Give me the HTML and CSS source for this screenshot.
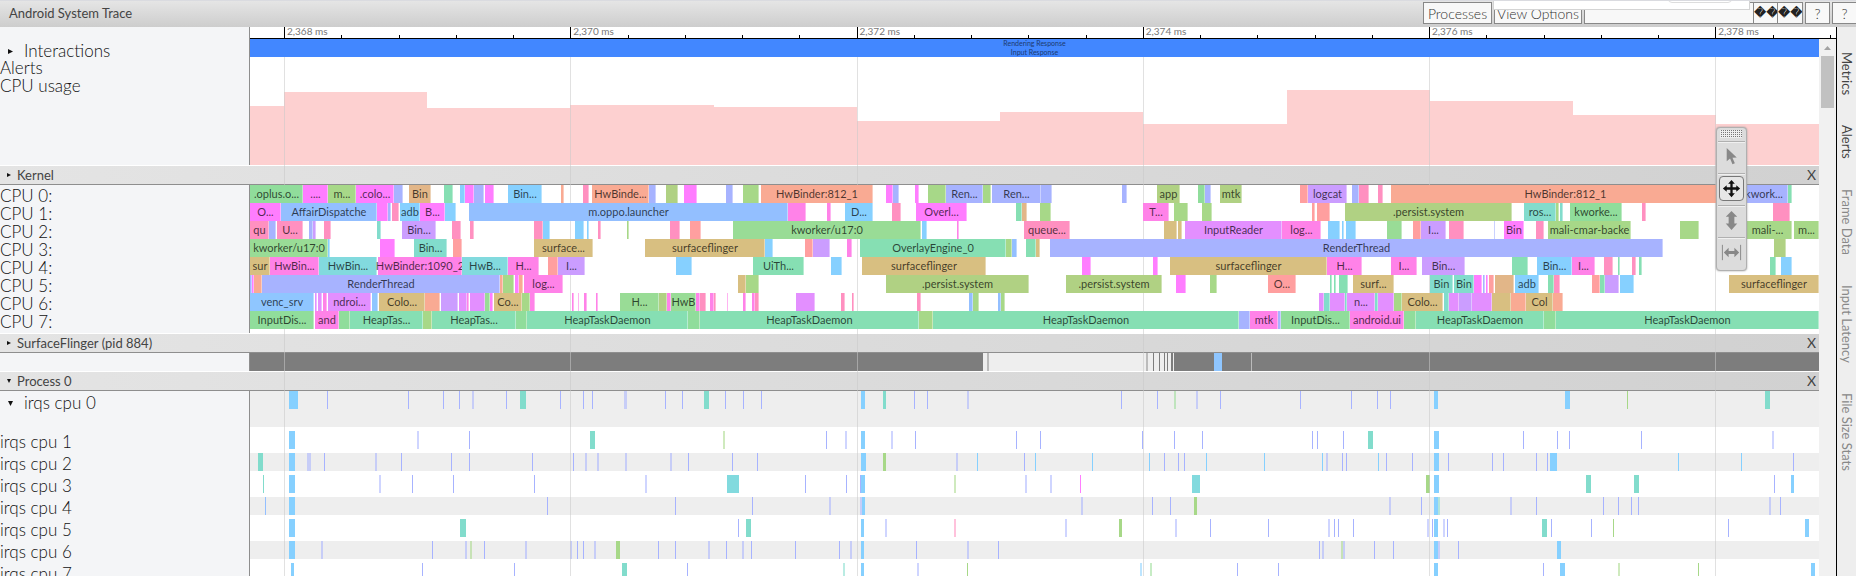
FILE: index.html
```html
<!DOCTYPE html>
<html lang="en">
<head>
<meta charset="utf-8">
<title>Android System Trace</title>
<link rel="stylesheet" href="styles.css">
</head>
<body>
<header class="topbar">
  <h1 class="title">Android System Trace</h1>
  <div class="controls">
    <button class="btn processes" type="button">Processes</button>
    <button class="btn options" type="button">View Options</button>
    <div class="find">
      <input class="find-input" type="text" aria-label="Find">
      <button class="btn sq glyph" type="button" aria-label="Previous">&#xFFFD;&#xFFFD;</button>
      <button class="btn sq glyph" type="button" aria-label="Next">&#xFFFD;&#xFFFD;</button>
    </div>
    <button class="btn sq" type="button">?</button>
    <button class="btn sq" type="button">?</button>
  </div>
  <div class="popup"><span class="popup-chip"></span></div>
</header>
<div class="main">
  <div class="viewer">
    <div class="ruler-row">
      <div class="side"></div>
      <div class="ruler"><div class="scale" id="scale"></div></div>
    </div>
    <div class="scroller">
      <main class="tracks">
        <div class="block">
          <div class="side">
            <div class="label nested"><span class="tri"></span>Interactions</div>
            <div class="label">Alerts</div>
            <div class="label">CPU usage</div>
          </div>
          <div class="lane">
            <div class="response"><span>Rendering Response</span><span>Input Response</span></div>
            <svg class="usage" viewBox="0 0 1569 73" preserveAspectRatio="none" aria-hidden="true">
              <path d="M0 73V14H34V0H177V16H320V13H464V15H607V29H750V20H893V32H1037V-2H1180V9H1323V23H1466V32H1569V73Z"/>
            </svg>
          </div>
        </div>
        <div class="group"><span class="tri"></span><span>Kernel</span><button class="close" type="button">X</button></div>
        <div class="block">
          <div class="side" id="cpu-labels"></div>
          <div class="lane cpus" id="cpus"></div>
        </div>
        <div class="group"><span class="tri"></span><span>SurfaceFlinger (pid 884)</span><button class="close" type="button">X</button></div>
        <div class="block">
          <div class="side"></div>
          <div class="lane"><div class="row quiet" id="flinger"></div></div>
        </div>
        <div class="group"><span class="tri down"></span><span>Process 0</span><button class="close" type="button">X</button></div>
        <div class="block last">
          <div class="side irq-labels" id="irq-labels"></div>
          <div class="lane irqs" id="irqs"></div>
        </div>
        <div class="gridlines" id="gridlines"></div>
        <div class="toolbox">
          <div class="grip"></div>
          <button class="tool" type="button" aria-label="Selection"><svg viewBox="0 0 24 24"><path d="M7 3V17L10.500 14L13 20L15.500 19L13 13.300L17.500 13Z" fill="#888"/></svg></button>
          <button class="tool on" type="button" aria-label="Pan"><svg viewBox="0 0 24 24"><path d="M12 3L15.500 7H13.200V10.800H17V8.500L21 12L17 15.500V13.200H13.200V17H15.500L12 21L8.500 17H10.800V13.200H7V15.500L3 12L7 8.500V10.800H10.800V7H8.500Z" fill="#111"/></svg></button>
          <button class="tool" type="button" aria-label="Zoom"><svg viewBox="0 0 24 24"><path d="M12 2L18 8H15V15H18L12 22L6 15H9V8H6Z" fill="#888"/></svg></button>
          <button class="tool" type="button" aria-label="Timing"><svg viewBox="0 0 24 24"><path d="M2.500 4V20M21.500 4V20" stroke="#888" fill="none"/><path d="M4 12L9 7V10.500H15V7L20 12L15 17V13.500H9V17Z" fill="#888"/></svg></button>
        </div>
      </main>
      <div class="scrollbar"><span class="arrow"></span><span class="thumb"></span></div>
    </div>
  </div>
  <nav class="tabs">
    <button class="tab" type="button">Metrics</button>
    <button class="tab" type="button">Alerts</button>
    <button class="tab off" type="button">Frame Data</button>
    <button class="tab off" type="button">Input Latency</button>
    <button class="tab off" type="button">File Size Stats</button>
  </nav>
</div>
<script src="trace.js"></script>
</body>
</html>
```

FILE: styles.css
```css
* { box-sizing: border-box; }
body {
  margin: 0;
  height: 100vh;
  display: flex;
  flex-direction: column;
  overflow: hidden;
  background: #fff;
  color: #222;
  font-family: Lato, "Open Sans", sans-serif;
  font-size: 13px;
}
button, input { font: inherit; color: inherit; margin: 0; padding: 0; }

/* Top bar */
.topbar {
  position: relative;
  flex: none;
  display: flex;
  align-items: center;
  height: 27px;
  padding-left: 9px;
  overflow: hidden;
  border-top: 1px solid #dadbe0;
  background: linear-gradient(#e5e5e5, #cdcdcd);
}
.title { margin: 0; flex: 1; padding-bottom: 2px; font-size: 13px; font-weight: 400; color: #444; }
.controls { display: flex; gap: 2px; margin-right: -1px; padding-bottom: 2px; font-size: 14px; font-weight: 300; color: #333; }
.btn { height: 22px; padding: 0; border: 1px solid #888; border-radius: 0; background: #f8f8f8; white-space: nowrap; }
.processes { width: 69px; }
.options { width: 88px; }
.sq { width: 25px; overflow: hidden; }
.glyph { font-size: 12px; color: #222; font-family: "DejaVu Sans", sans-serif; }
.find { display: flex; }
.find-input { width: 169px; height: 22px; border: 1px solid #888; border-right: 0; background: #f8f8f8; }
.find .glyph + .glyph { border-left: 0; }
.popup {
  position: absolute;
  top: 0;
  right: 106px;
  width: 257px;
  height: 9px;
  border: 1px solid #d4d4d4;
  border-top: 0;
  background: #fff;
}
.popup-chip {
  position: absolute;
  top: -8px;
  right: 17px;
  width: 64px;
  height: 10px;
  border: 1px solid #ddd;
  border-radius: 4px;
}

/* Frame */
.main { flex: 1; min-height: 0; display: flex; }
.viewer { flex: 1; min-width: 0; display: flex; flex-direction: column; }
.ruler-row { flex: none; display: flex; height: 12px; }
.side { flex: none; width: 250px; padding-right: 1px; border-right: 1px solid #8e8e8e; background: #f4f5f7; }
.ruler { flex: 1; padding-right: 17px; border-bottom: 1px solid #000; }
.scale { position: relative; height: 11px; font-size: 10px; line-height: 11px; color: #777; }
.tick { position: absolute; bottom: 0; width: 1px; height: 3px; background: #000; }
.tick.major { height: 11px; }
.tick-label { position: absolute; top: -1px; padding-left: 3px; white-space: nowrap; }
.scroller { flex: 1; min-height: 0; display: flex; }
.tracks { position: relative; flex: 1; min-width: 0; overflow: hidden; }

.block { display: flex; margin-bottom: 1px; }
.lane { flex: 1; min-width: 0; overflow: hidden; }
.label { height: 18px; font-size: 17px; line-height: 22px; font-weight: 300; white-space: nowrap; color: #111; }
.nested { display: flex; align-items: flex-start; padding-left: 8px; line-height: 24px; }
.nested .tri { margin: 10px 11px 0 0; }
.tri { flex: none; width: 5px; height: 5px; background: #111; clip-path: polygon(0 0, 100% 50%, 0 100%); }
.tri.down { clip-path: polygon(0 0, 100% 0, 50% 100%); }

.response {
  height: 18px;
  display: flex;
  flex-direction: column;
  align-items: center;
  background: #4287ff;
  color: #1c3a70;
  font-size: 7px;
  line-height: 9px;
}
.usage { display: block; width: 100%; height: 73px; margin-top: 35px; overflow: visible; fill: #fdd0d0; }

.group {
  display: flex;
  align-items: center;
  height: 19px;
  padding: 0 3px 0 7px;
  border-bottom: 1px solid #8e8e8e;
  background: linear-gradient(90deg, #e4e4e4, #d1d1d1);
  line-height: 18px;
  color: #444;
}
.group .tri { width: 4px; height: 4px; margin-right: 6px; }
.close { margin-left: auto; border: 0; background: none; line-height: 18px; font-size: 14px; }

/* Slices */
.cpus { padding-bottom: 4px; }
.row { position: relative; height: 18px; }
.slice {
  position: absolute;
  top: 0;
  height: 18px;
  display: flex;
  justify-content: center;
  box-shadow: inset -1px 0 rgba(255, 255, 255, .4);
  font-size: 11px;
  line-height: 17px;
  white-space: nowrap;
  color: rgba(0, 0, 0, .7);
}
.slice.named { z-index: 1; }
.mark { position: absolute; top: 0; height: 18px; }
.mark.soft { opacity: .55; }
.quiet { background: #eee; }
.irqs .row { margin-bottom: 4px; }
.irqs .row:nth-child(odd) { background: #eee; }
.irqs .row:first-child { height: 36px; }
.irq-labels .label { margin-bottom: 4px; }
.irq-labels .nested { height: 36px; }

.gridlines { position: absolute; top: 18px; right: 0; bottom: 0; left: 250px; pointer-events: none; }
.gridline { position: absolute; top: 0; bottom: 0; width: 1px; background: rgba(200, 200, 200, .55); }

/* Floating tools */
.toolbox {
  position: absolute;
  z-index: 2;
  top: 88px;
  right: 72px;
  width: 31px;
  padding: 2px 2px 1px 1px;
  border: 1px solid #b0b0b0;
  border-radius: 4px;
  background: #dcdcdc;
  box-shadow: 0 0 2px #999;
}
.grip { height: 8px; margin: 0 2px 3px; background: conic-gradient(#777 25%, #eee 0) 0 0 / 2px 2px; }
.tool {
  display: block;
  width: 27px;
  height: 32px;
  padding: 2px 1px 4px;
  border: 0;
  border-top: 1px solid #b0b0b0;
  background: none;
  box-shadow: inset 0 1px #f0f0f0;
}
.tool svg { display: block; width: 25px; height: 25px; border: 1px solid transparent; border-radius: 4px; }
.tool.on svg { border-color: #777; background: #e6e6e6; }

.scrollbar { flex: none; width: 17px; background: #f1f1f1; display: flex; flex-direction: column; align-items: center; gap: 6px; padding-top: 7px; }
.arrow { width: 7px; height: 4px; background: #a3a3a3; clip-path: polygon(50% 0, 100% 100%, 0 100%); }
.thumb { width: 13px; height: 52px; background: #c1c1c1; }

.tabs { flex: none; width: 20px; display: flex; flex-direction: column; align-items: center; gap: 30px; padding-top: 25px; border-left: 1px solid #000; background: #eee; }
.tab { border: 0; background: none; writing-mode: vertical-rl; font-size: 13px; line-height: 18px; white-space: nowrap; color: #444; }
.tab.off { color: #888; }
```

FILE: trace.js
```js
const VIEW = { start: 250, end: 1819 };
const SPAN = VIEW.end - VIEW.start;

const COLORS = {
  g1: '#90dd9b', g: '#99dc96', mg: '#ff7dff', m2: '#ff82e8', ol: '#a7d888', o2: '#b0d183',
  pk: '#ff90c0', rd: '#ff9f9f', or: '#f9aa93', br: '#e2b688', ta: '#d8bf81', bl: '#86d0ff',
  b2: '#93bfff', b3: '#8fc6ff', in: '#a7b3ff', pu: '#cb9dff', p2: '#e38fff', te: '#82dccc',
  t2: '#82dade', gn: '#86dfb3', dk: '#7d7d7d', wh: '#bbbbbb'
};

const CPUS = [
  '250 303 g1 .oplus.o...|303 328 mg ....|328 356 ol m...|356 394 mg .colo...|394 403 in|409 431 br Bin|444 453 gn|460 465 bl|465 474 mg|474 484 in|485 494 mg|508 542 bl Bin...|561 564 or|583 589 pk|592 649 or HwBinde...|649 656 in|666 678 o2|684 697 mg|726 733 in|743 759 ol|761 873 or HwBinder:812_1|886 893 mg|893 899 in|915 919 mg|928 946 ol|946 983 in Ren...|983 991 ol|992 1041 in Ren...|1041 1052 in|1122 1127 in|1157 1180 o2 app|1198 1205 g1|1205 1211 in|1220 1242 o2 mtk|1300 1308 rd|1308 1347 pu logcat|1352 1359 in|1359 1369 pk|1378 1383 pk|1391 1740 or HwBinder:812_1|1740 1788 in kwork...|1788 1792 gn',
  '250 281 mg O...|281 377 b2 AffairDispatche|377 388 mg|388 391 in|392 399 pk|400 420 bl adb|420 445 mg B...|445 456 bl|469 788 b2 m.oppo.launcher|788 806 m2|827 831 m2|845 873 bl D...|892 901 pk|916 967 mg Overl...|1016 1022 gn|1022 1027 br|1040 1051 ol|1143 1169 m2 T...|1174 1188 ol|1202 1212 ol|1312 1315 rd|1317 1330 rd|1345 1512 o2 .persist.system|1524 1556 te ros...|1556 1559 ol|1560 1563 te|1570 1622 g1 kworke...|1642 1646 pk|1773 1790 pk',
  '250 269 pk qu|269 276 in|277 303 pk U...|309 313 in|313 316 pu|324 331 pk|377 381 te|402 436 pu Bin...|452 461 pk|470 474 pk|534 543 pk|543 550 bl|575 584 bl|587 589 bl|598 601 pk|627 629 ol|670 680 pk|690 701 rd|733 921 g kworker/u17:0|922 927 bl|957 959 m2|1024 1070 pk queue...|1164 1177 ta|1178 1182 ta|1185 1282 p2 InputReader|1282 1321 m2 log...|1328 1340 bl|1342 1344 bl|1346 1356 bl|1387 1402 g|1413 1421 rd|1421 1446 pu I...|1449 1464 pk|1494 1495 in|1504 1524 mg Bin|1536 1544 pk|1548 1631 ol mali-cmar-backe|1680 1699 ol|1743 1792 ol mali-...|1794 1819 ol m...',
  '250 328 g kworker/u17:0|328 330 bl|380 395 mg|414 447 te Bin...|453 462 rd|534 593 ta surface...|645 765 ta surfaceflinger|765 773 bl|805 813 rd|813 830 pu|847 852 m2|860 1006 gn OverlayEngine_0|1006 1012 ol|1012 1017 b2|1026 1036 gn|1036 1040 ta|1050 1663 in RenderThread|1774 1786 o2',
  '250 270 ta sur|270 319 m2 HwBin...|319 377 t2 HwBin...|378 462 m2 HwBinder:1090_2|462 508 t2 HwB...|508 539 m2 H...|548 558 rd|558 585 pu I...|676 692 bl|753 804 gn UiTh...|831 842 bl|862 986 ta surfaceflinger|1082 1091 mg|1153 1158 mg|1170 1327 ta surfaceflinger|1327 1362 m2 H...|1391 1417 m2 I...|1422 1465 pu Bin...|1512 1528 gn|1537 1572 bl Bin...|1572 1595 m2 I...|1604 1613 pk|1618 1620 gn|1632 1636 pk|1639 1642 gn|1770 1776 gn|1781 1792 bl',
  '250 252 in|252 254 mg|254 262 or|262 500 in RenderThread|500 503 or|503 514 ol|515 519 mg|519 523 or|524 563 m2 log...|738 746 ta|746 759 ol|886 1029 o2 .persist.system|1066 1162 o2 .persist.system|1176 1186 mg|1210 1217 ol|1268 1296 rd O...|1330 1332 gn|1334 1336 gn|1339 1348 gn|1353 1394 ta surf...|1430 1453 te Bin|1454 1474 te Bin|1474 1482 mg|1483 1485 in|1486 1488 mg|1489 1494 rd|1495 1514 br|1515 1539 bl adb|1548 1554 gn|1554 1560 pk|1592 1600 rd|1600 1605 gn|1605 1619 pu|1620 1634 bl|1729 1819 ta surfaceflinger',
  '250 314 b3 venc_srv|315 317 p2|318 322 p2|323 327 m2|328 371 p2 ndroi...|372 378 b3|379 425 ta Colo...|425 440 or|441 458 pu|459 467 p2|467 469 m2|470 485 p2|485 490 g|490 493 mg|494 522 ta Co...|522 530 ol|530 535 m2|572 574 m2|578 579 m2|584 587 m2|596 598 m2|620 659 g H...|659 667 o2|667 671 m2|671 696 g HwB|696 700 m2|700 706 pk|710 714 m2|714 716 pk|727 728 m2|743 746 m2|752 755 m2|755 759 pk|796 815 p2|841 845 pk|852 854 pk|917 921 pk|969 973 b2|973 979 ol|998 1001 b2|1001 1005 ol|1319 1324 p2|1324 1330 te|1330 1345 p2|1345 1347 te|1347 1375 p2 n...|1375 1378 te|1378 1394 p2|1394 1402 ol|1402 1443 ta Colo...|1444 1449 te|1449 1459 p2|1459 1472 pu|1472 1492 p2|1492 1511 ta|1511 1526 or|1526 1553 ta Col|1553 1563 or',
  '250 314 g1 InputDis...|315 339 m2 and|339 350 g1|350 423 gn HeapTas...|423 432 ol|432 516 gn HeapTas...|516 527 g1|527 688 gn HeapTaskDaemon|688 700 g1|700 919 gn HeapTaskDaemon|919 933 ol|933 1239 gn HeapTaskDaemon|1239 1250 in|1250 1278 m2 mtk|1278 1281 in|1281 1350 g1 InputDis...|1350 1404 m2 android.ui|1404 1416 g1|1416 1544 gn HeapTaskDaemon|1544 1556 g1|1556 1819 gn HeapTaskDaemon'
];

/* position[+width][:color], one unit wide and "in" coloured by default */
const FLINGER = '250+733:dk 987+2:wh 1146+2:wh 1153+1:dk 1159+1:dk 1164+1:dk 1167+1:dk 1171+2:dk 1174+641:dk 1214+8:b3 1251+1:wh 1815+4:dk';
const IRQS = [
  '289+9:bl 327 408 443 459 472+2 506 520+6:te 560 583 592 624+3 665 682 704+5:te 725 743 761 861+4:bl 883+3:te 914 927 967+2 1121 1157 1174+2:g 1196+2 1220 1300 1351 1377 1390 1434+4:bl 1565+5:bl 1627:ol 1765+5:te',
  '289+6:bl 417+2 469 590+5:te 723+2:ol 826 845+2 861+4:bl 891+2 915 1016 1040 1142 1174 1202 1312 1317 1343 1368+5:te 1434+5:bl 1523 1557 1569 1641 1772+2',
  '258+5:te 289+6:bl 307+4 324 375+2 401 451 469 532 573 585+2 597+2 625+2 670+2 688 732 757 861+5:bl 883+3:ol 956+2 977:bl 1024 1035:bl 1092:bl 1149:bl 1164 1178 1184 1206:bl 1264:bl 1322:bl 1326+2 1342 1346 1378:bl 1386 1412 1434+5:bl 1448 1492 1503 1536 1547 1550+7:bl 1678:bl 1741:bl 1793',
  '263:te 289+6:bl 379+2 412 453 534 645+2 727+12:t2 805 846 860 861+4:bl 954+2:ol 1025+2 1050+2 1080:mg 1192+8:t2 1426+4:ol 1434+5:bl 1586+5:te 1634+5:te 1774 1791+3:bl',
  '265:b2 289+6:bl 547 675 752 829+2 860+2 862+3:bl 1081+2 1152 1170 1194+3:ol 1389+2 1421 1434+4:bl 1438+2:te 1510+2 1536 1603 1618 1631 1638 1769+2 1780',
  '289+6:bl 460+6:te 738 746+5:te 861+3:bl 885+2 954+2:pk 1065+2 1119+3:ol 1175+2 1210 1268 1328+2 1334 1338 1353 1427+2 1432 1434+4:bl 1443+2 1447 1542+5:te 1551 1591 1613:ol 1728 1805+4:bl',
  '289+6:bl 321+2 432 465+2 470+2:ol 484 525+2 570+2 577 583 594+2 616+4:ol 658 675 708+2 726 742+2 751 795 839 850+2 861+3:bl 916 967+2 998 1319 1322+2 1341+2:ol 1343+2 1374 1393 1434+4:bl 1438+2 1458 1557+4:bl',
  '291+3:bl 422 514 622+5:te 687 843+2:te 861+3:bl 917+2 967:ol 1140+2:bl 1150+2:g 1237 1278 1434+4:bl 1543 1560+5:bl 1618+2:ol 1698:ol 1811+4:bl'
];

const byId = id => document.getElementById(id);
const pct = n => (n / SPAN * 100) + '%';

function add(parent, className, text) {
  const el = document.createElement('div');
  el.className = className;
  if (text) el.textContent = text;
  parent.append(el);
  return el;
}

function place(el, start, width) {
  el.style.left = pct(start - VIEW.start);
  if (width) el.style.width = pct(width);
  return el;
}

function drawMarks(row, source) {
  for (const item of source.split(' ')) {
    const [, x, w = '1', color = 'in'] = item.match(/^(\d+)(?:\+(\d+))?(?::(\w+))?$/);
    const soft = +w > 1 && (color === 'in' || w === '2') && color !== 'dk' && color !== 'wh';
    place(add(row, soft ? 'mark soft' : 'mark'), +x, +w).style.background = COLORS[color];
  }
}

CPUS.forEach((source, i) => {
  add(byId('cpu-labels'), 'label', `CPU ${i}:`);
  const row = add(byId('cpus'), 'row');
  for (const item of source.split('|')) {
    const [start, end, color, label] = item.split(' ');
    const slice = add(row, label ? 'slice named' : 'slice', label);
    place(slice, +start, end - start).style.background = COLORS[color];
  }
});

drawMarks(byId('flinger'), FLINGER);

IRQS.forEach((source, i) => {
  const label = add(byId('irq-labels'), i ? 'label' : 'label nested');
  if (!i) add(label, 'tri down');
  label.append(`irqs cpu ${i}`);
  drawMarks(add(byId('irqs'), 'row'), source);
});

const FIRST = 284;
const STEP = 286.25;
for (let i = 0; i < 28; i++) {
  const x = FIRST + i * STEP / 5;
  const major = i % 5 === 0;
  place(add(byId('scale'), major ? 'tick major' : 'tick'), x);
  if (major) {
    const time = (2368 + i / 5 * 2).toLocaleString('en-US');
    place(add(byId('scale'), 'tick-label', `${time} ms`), x);
    place(add(byId('gridlines'), 'gridline'), x);
  }
}
```
